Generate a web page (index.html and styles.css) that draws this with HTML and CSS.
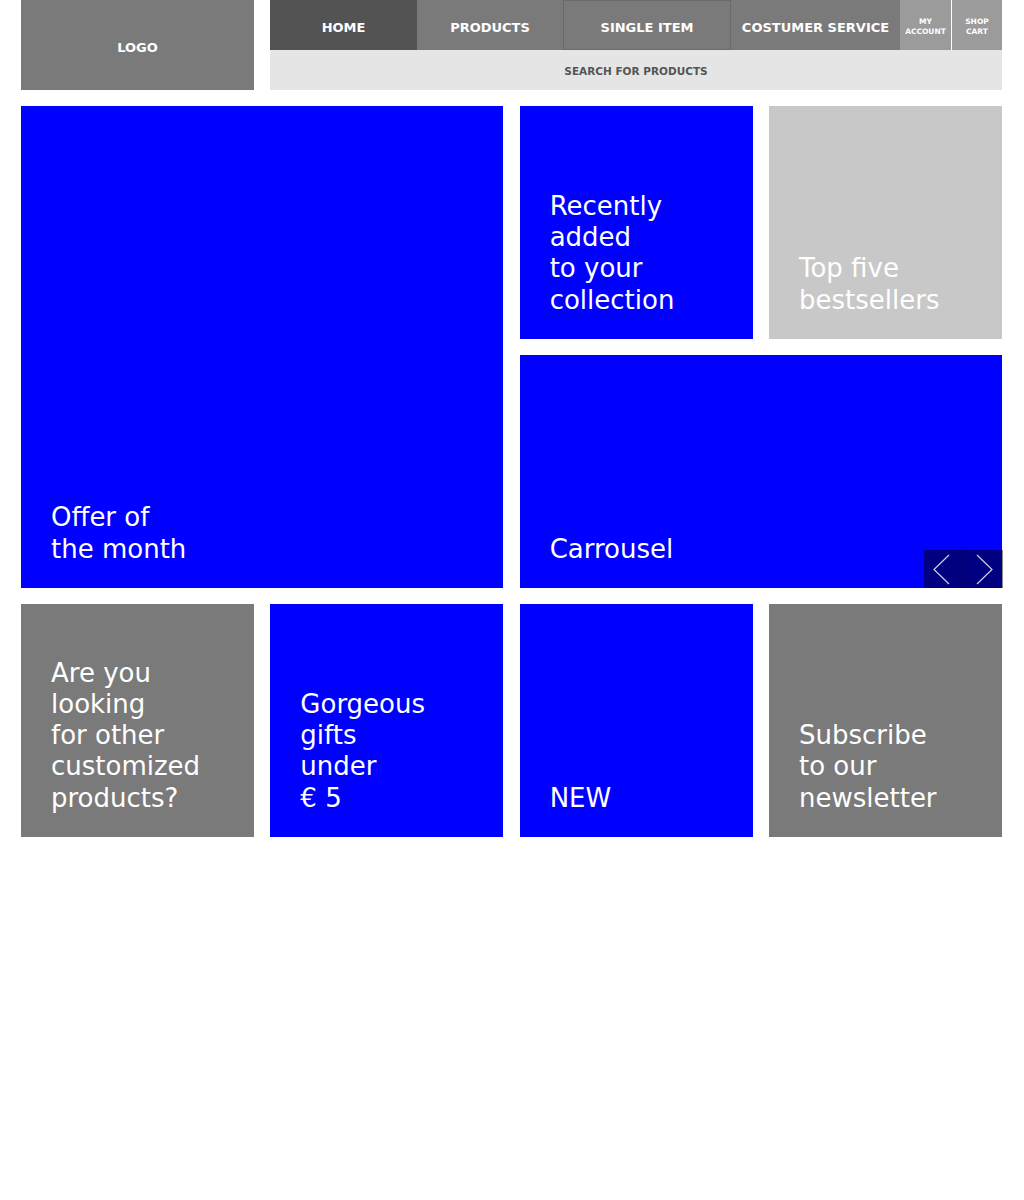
FILE: index.html
```html
<!DOCTYPE html>
<html lang="en">
<head>
<meta charset="utf-8">
<title>Shop</title>
<link rel="stylesheet" href="styles.css">
</head>
<body>
<div class="page">
  <header class="header">
    <div class="logo">LOGO</div>
    <div class="navwrap">
      <nav class="nav">
        <a class="nav-item home">HOME</a>
        <a class="nav-item products">PRODUCTS</a>
        <a class="nav-item single">SINGLE ITEM</a>
        <a class="nav-item service">COSTUMER SERVICE</a>
        <a class="nav-item small account">MY<br>ACCOUNT</a>
        <a class="nav-item small cart">SHOP<br>CART</a>
      </nav>
      <div class="search">SEARCH FOR PRODUCTS</div>
    </div>
  </header>
  <main class="grid">
    <div class="tile blue offer">Offer of<br>the month</div>
    <div class="tile blue">Recently<br>added<br>to your<br>collection</div>
    <div class="tile light">Top five<br>bestsellers</div>
    <div class="tile blue carousel">Carrousel
      <div class="arrows">
        <span class="arrow">
          <svg width="38" height="38" viewBox="0 0 38 38"><polyline points="25,5 10,19.5 25,34" fill="none" stroke="#d0d0e0" stroke-width="1.2"/></svg>
        </span>
        <span class="arrow">
          <svg width="38" height="38" viewBox="0 0 38 38"><polyline points="14,5 29,19.5 14,34" fill="none" stroke="#d0d0e0" stroke-width="1.2"/></svg>
        </span>
      </div>
    </div>
    <div class="tile gray">Are you<br>looking<br>for other<br>customized<br>products?</div>
    <div class="tile blue">Gorgeous<br>gifts<br>under<br>€ 5</div>
    <div class="tile blue">NEW</div>
    <div class="tile gray">Subscribe<br>to our<br>newsletter</div>
  </main>
</div>
</body>
</html>
```
FILE: styles.css
```css
html, body {
  margin: 0;
  padding: 0;
  background: #fff;
}
body {
  font-family: "DejaVu Sans", "Open Sans", sans-serif;
}
.page {
  width: 981px;
  margin-left: 21px;
}
.header {
  display: grid;
  grid-template-columns: 233px 1fr;
  column-gap: 16px;
  height: 90px;
}
.logo {
  background: #7a7a7a;
  color: #fff;
  font-weight: bold;
  font-size: 13px;
  display: flex;
  align-items: center;
  justify-content: center;
  padding-top: 4px;
  box-sizing: border-box;
}
.navwrap {
  display: flex;
  flex-direction: column;
}
.nav {
  display: flex;
  height: 50px;
}
.nav-item {
  display: flex;
  align-items: center;
  justify-content: center;
  color: #fff;
  font-weight: bold;
  font-size: 13px;
  background: #7a7a7a;
  box-sizing: border-box;
  text-align: center;
  padding-top: 4px;
}
.home { width: 147px; background: #535353; }
.products { width: 146px; }
.single { width: 168px; border: 1px solid #6a6a6a; }
.service { width: 169px; }
.small {
  width: 51px;
  font-size: 7.5px;
  line-height: 10px;
  background: #9b9b9b;
}
.cart { border-left: 1px solid #fff; }
.search {
  height: 40px;
  background: #e5e5e5;
  color: #555;
  font-weight: bold;
  font-size: 10.5px;
  display: flex;
  align-items: center;
  justify-content: center;
  padding-top: 2px;
  box-sizing: border-box;
}
.grid {
  margin-top: 16px;
  display: grid;
  grid-template-columns: 233px 233px 233px 233px;
  grid-auto-rows: 233px;
  column-gap: 16.33px;
  row-gap: 16px;
}
.tile {
  position: relative;
  display: flex;
  align-items: flex-end;
  padding: 0 20px 23px 30px;
  box-sizing: border-box;
  color: #fff;
  font-size: 26px;
  line-height: 31.3px;
}
.blue { background: #0000ff; }
.gray { background: #7a7a7a; }
.light { background: #c8c8c8; }
.offer {
  grid-column: span 2;
  grid-row: span 2;
}
.carousel {
  grid-column: span 2;
}
.arrows {
  position: absolute;
  right: 0;
  bottom: 0;
  display: flex;
  box-shadow: 1px 0 0 #888;
}
.arrow {
  width: 38.5px;
  height: 38px;
  background: #000080;
  display: flex;
}
.arrow + .arrow {
  border-left: 1px solid #00006a;
}
```
